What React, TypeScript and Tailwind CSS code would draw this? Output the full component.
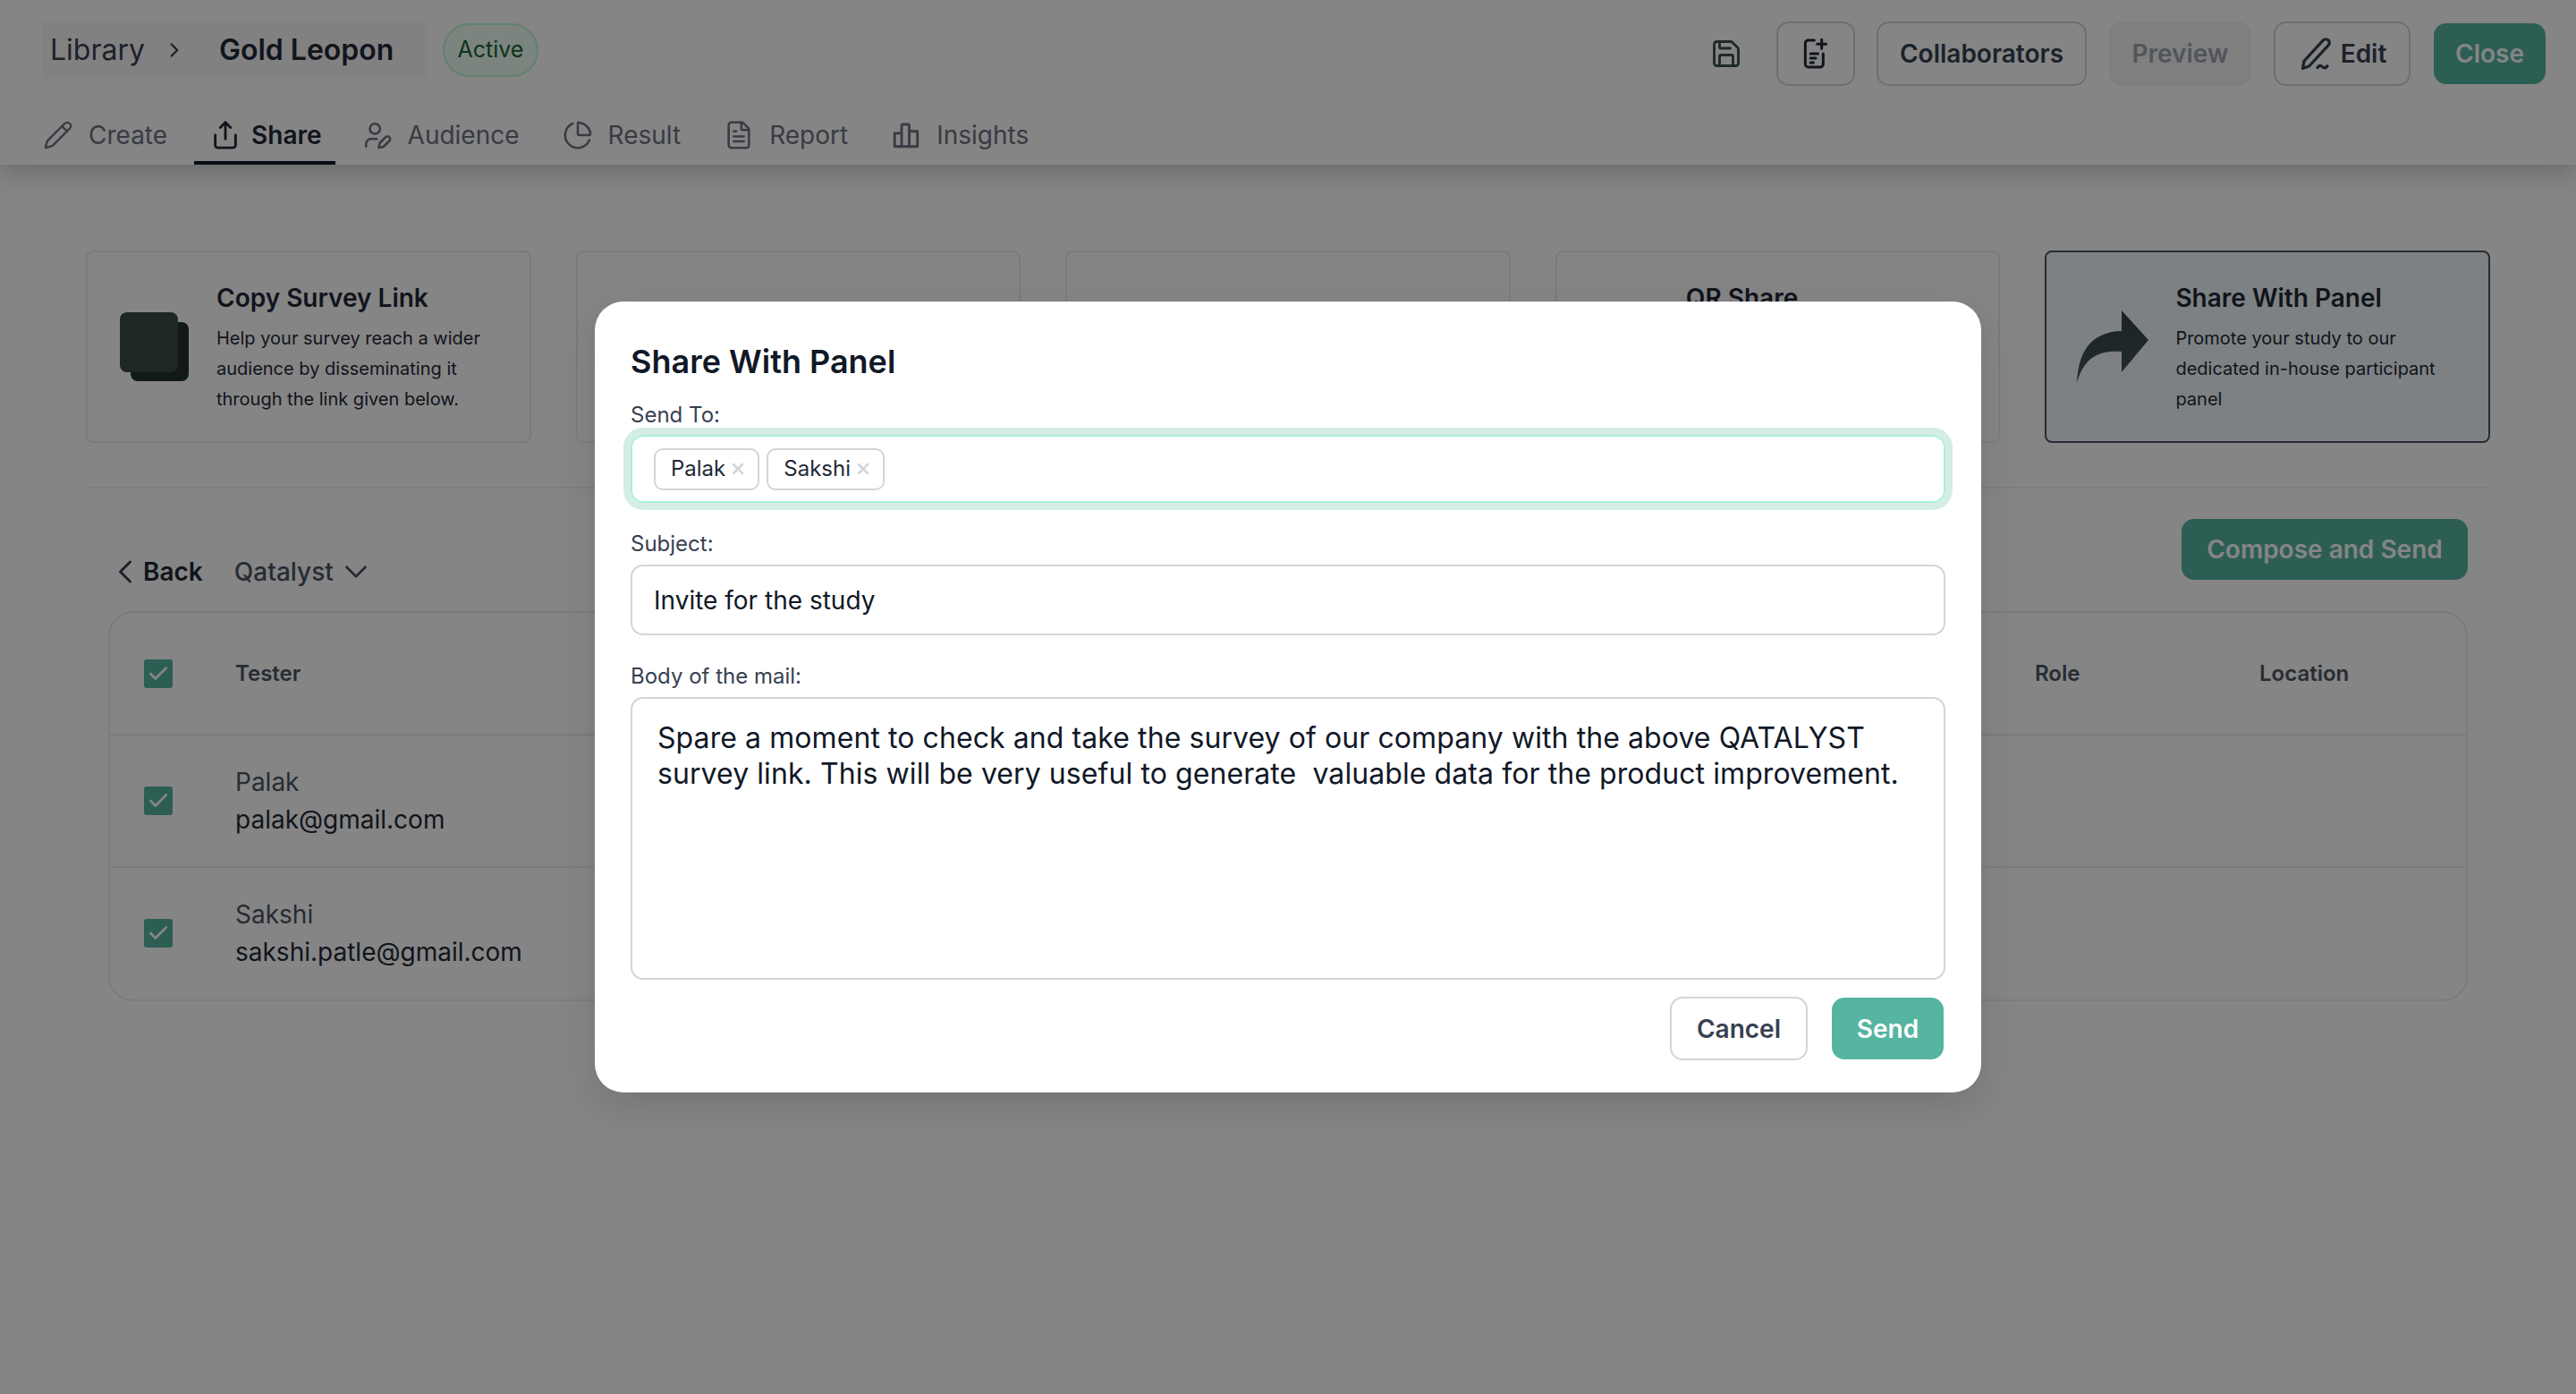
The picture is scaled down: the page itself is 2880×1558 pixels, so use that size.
import { Check, ChevronDown, ChevronLeft, ChevronRight, ChartPie, FileText, Pencil, Save, Share, UserPen, X } from "lucide-react";
import type { ReactNode } from "react";

function InsightsIcon() {
  return (
    <svg width="34" height="34" viewBox="0 0 24 24" fill="none" stroke="currentColor" strokeWidth="2" strokeLinejoin="round">
      <path d="M3 10.500h5.500V21H3zM8.500 4.500a1 1 0 0 1 1-1h4a1 1 0 0 1 1 1V21h-6zM14.500 9H21v12h-6.500z" />
    </svg>
  );
}

function FileAddIcon() {
  return (
    <svg width="40" height="40" viewBox="0 0 24 24" fill="none" stroke="currentColor" strokeWidth="1.800" strokeLinecap="round" strokeLinejoin="round">
      <path d="M11 3H7a2 2 0 0 0-2 2v14a2 2 0 0 0 2 2h8a2 2 0 0 0 2-2v-7" />
      <path d="M16 2.500v6M13 5.500h6M8.500 12h5M8.500 15h3.500M8.500 18h2" />
    </svg>
  );
}

function EditIcon() {
  return (
    <svg width="44" height="44" viewBox="0 0 24 24" fill="none" stroke="currentColor" strokeWidth="1.800" strokeLinecap="round" strokeLinejoin="round">
      <path d="M3 21l.8-4.500L15.500 3.800a2.200 2.200 0 0 1 3.100 0 2.200 2.200 0 0 1 0 3.100L7 19.500z" />
      <path d="M12 20.500c1-1.500 2-1.500 3-.5s2 1 3-.5" />
    </svg>
  );
}

function CopyIcon() {
  return (
    <svg width="77" height="77" viewBox="0 0 77 77">
      <rect x="12" y="11" width="65" height="66" rx="8" fill="#213230" />
      <rect x="0" y="0" width="65" height="67" rx="8" fill="#3a494a" />
    </svg>
  );
}

function ShareArrowIcon() {
  return (
    <svg width="80" height="81" viewBox="0 0 80 81">
      <defs>
        <linearGradient id="share-arrow" x1="0" y1="0" x2="0" y2="1">
          <stop offset="0" stopColor="#334041" />
          <stop offset="1" stopColor="#46595c" />
        </linearGradient>
      </defs>
      <path d="M50 0L80 33 50 69V46C25 44 8 52 0 81 2 40 20 24 50 23Z" fill="url(#share-arrow)" />
    </svg>
  );
}

const TABS = [
  { label: "Create", icon: <Pencil size={34} strokeWidth={1.7} /> },
  { label: "Share", icon: <Share size={34} strokeWidth={2} />, active: true },
  { label: "Audience", icon: <UserPen size={34} strokeWidth={1.8} /> },
  { label: "Result", icon: <ChartPie size={34} strokeWidth={1.8} /> },
  { label: "Report", icon: <FileText size={34} strokeWidth={1.8} /> },
  { label: "Insights", icon: <InsightsIcon /> },
];

function Header() {
  return (
    <header className="relative h-[184px] bg-white shadow-[0_8px_28px_rgba(0,0,0,0.22)]">
      <div className="flex h-[120px] items-start justify-between pl-[48px] pr-[34px] pt-[24px]">
        <div className="flex items-center gap-[17px]">
          <div className="flex h-[64px] w-[430px] items-center bg-[#f7f7f7] pl-[8px] text-[32px]">
            <span className="text-[#374151]">Library</span>
            <ChevronRight size={26} strokeWidth={2.2} className="ml-[20px] text-[#374151]" />
            <span className="ml-[37px] font-semibold text-[#1f2937]">Gold Leopon</span>
          </div>
          <span className="flex h-[60px] w-[107px] items-center justify-center rounded-[30px] border-2 border-[#bbf7d0] bg-[#ecfdf3] text-[25px] text-[#166534]">
            Active
          </span>
        </div>
        <div className="flex items-center">
          <Save size={36} strokeWidth={1.9} className="text-[#3d4f4c]" />
          <button className="ml-[38px] flex h-[72px] w-[88px] items-center justify-center rounded-[14px] border-2 border-[#d1d5db] text-[#1f2937]">
            <FileAddIcon />
          </button>
          <button className="ml-[24px] h-[72px] w-[235px] rounded-[14px] border-2 border-[#d1d5db] text-[28px] font-semibold text-[#374151]">
            Collaborators
          </button>
          <button className="ml-[25px] h-[72px] w-[159px] rounded-[14px] border-2 border-[#f3f4f6] bg-[#f3f4f6] text-[28px] font-semibold text-[#9ca3af]">
            Preview
          </button>
          <button className="ml-[25px] flex h-[72px] w-[153px] items-center justify-center gap-[4px] rounded-[14px] border-2 border-[#d1d5db] text-[28px] font-semibold text-[#374151]">
            <EditIcon />
            Edit
          </button>
          <button className="ml-[26px] h-[68px] w-[125px] rounded-[14px] bg-[#55b5a0] text-[28px] font-semibold text-white">
            Close
          </button>
        </div>
      </div>
      <nav className="flex h-[64px] gap-[12px] pl-[30px]">
        {TABS.map((tab) => (
          <div
            key={tab.label}
            className={
              tab.active
                ? "flex h-[64px] items-center gap-[12px] border-b-4 border-[#111827] pl-[18px] pr-[15px] pt-[2px] text-[28px] font-semibold text-[#1f2937]"
                : "flex h-[64px] items-center gap-[17px] border-b-4 border-transparent px-[18px] pt-[2px] text-[28px] text-[#6b7280]"
            }
          >
            {tab.icon}
            {tab.label}
          </div>
        ))}
      </nav>
    </header>
  );
}

function OptionCard({ title, lines, icon, active }: { title?: string; lines?: string[]; icon?: ReactNode; active?: boolean }) {
  return (
    <div
      className={
        active
          ? "flex h-[215px] items-center gap-[30px] rounded-[8px] border-2 border-[#4b5563] bg-[#eff8fb] pl-[34px]"
          : "flex h-[215px] items-center gap-[30px] rounded-[8px] border-2 border-[#ececec] pl-[34px]"
      }
    >
      <div className="flex w-[80px] shrink-0 justify-center">{icon}</div>
      {title && (
        <div>
          <h3 className="text-[28px] leading-[40px] font-semibold text-[#1f2937]">{title}</h3>
          <div className="mt-[8px] text-[20px] leading-[34px] text-[#1f2937]">
            {lines?.map((l, i) => <p key={i}>{l}</p>)}
          </div>
        </div>
      )}
    </div>
  );
}

function CheckBox() {
  return (
    <span className="flex h-[32px] w-[32px] items-center justify-center rounded-[3px] bg-[#55b5a0] text-white">
      <Check size={26} strokeWidth={2.6} />
    </span>
  );
}

function TesterRow({ name, email }: { name: string; email: string }) {
  return (
    <div className="flex h-[148px] items-center border-t-2 border-[#ececec]">
      <div className="w-[140px] pl-[38px]">
        <CheckBox />
      </div>
      <div className="text-[28px] leading-[42px]">
        <p className="text-[#4b5563]">{name}</p>
        <p className="text-[#1f2937]">{email}</p>
      </div>
    </div>
  );
}

function ShareModal() {
  return (
    <div className="absolute inset-0 flex items-center justify-center bg-black/48">
      <div className="h-[884px] w-[1550px] rounded-[32px] bg-white px-[40px] pt-[42px] shadow-[0_16px_40px_rgba(0,0,0,0.12)]">
        <h2 className="text-[36px] leading-[50px] font-semibold text-[#111827]">Share With Panel</h2>
        <label className="mt-[18px] block text-[24px] leading-[34px] text-[#374151]">Send To:</label>
        <div className="mt-[5px] flex h-[76px] items-center gap-[8px] rounded-[14px] border-2 border-[#a7f3d0] pl-[24px] outline-8 outline-[#d5ede6]">
          {["Palak", "Sakshi"].map((n) => (
            <span key={n} className="flex h-[47px] items-center gap-[4px] rounded-[10px] border-2 border-[#d1d5db] pl-[17px] pr-[12px] text-[24px] text-[#1f2937]">
              {n}
              <X size={20} strokeWidth={3} className="text-[#d1d5db]" />
            </span>
          ))}
        </div>
        <label className="mt-[29px] block text-[24px] leading-[34px] text-[#374151]">Subject:</label>
        <div className="mt-[6px] flex h-[79px] items-center rounded-[14px] border-2 border-[#d1d5db] pl-[24px] text-[28px] text-[#111827]">
          Invite for the study
        </div>
        <label className="mt-[29px] block text-[24px] leading-[34px] text-[#374151]">Body of the mail:</label>
        <div className="mt-[6px] h-[316px] rounded-[14px] border-2 border-[#d1d5db] pl-[28px] pr-[20px] pt-[24px] text-[32px] leading-[40px] tracking-[0.08px] whitespace-pre-wrap text-[#111827]">
          {"Spare a moment to check and take the survey of our company with the above QATALYST\nsurvey link. This will be very useful to generate  valuable data for the product improvement."}
        </div>
        <div className="mt-[19px] flex items-center justify-end gap-[27px] pr-[2px]">
          <button className="h-[71px] w-[154px] rounded-[14px] border-2 border-[#d1d5db] text-[28px] font-semibold text-[#374151]">Cancel</button>
          <button className="h-[69px] w-[125px] rounded-[14px] bg-[#55b5a0] text-[28px] font-semibold text-white">Send</button>
        </div>
      </div>
    </div>
  );
}

export default function App() {
  return (
    <div className="relative h-[1558px] w-[2880px] overflow-hidden bg-white font-[Inter,sans-serif]">
      <Header />
      <main className="px-[96px] pt-[96px]">
        <div className="grid grid-cols-5 gap-[50px] border-b-2 border-[#ececec] pb-[49px]">
          <OptionCard
            title="Copy Survey Link"
            icon={<CopyIcon />}
            lines={["Help your survey reach a wider", "audience by disseminating it", "through the link given below."]}
          />
          <OptionCard />
          <OptionCard />
          <OptionCard title="QR Share" lines={["\u00a0", "\u00a0", "\u00a0"]} />
          <OptionCard
            active
            title="Share With Panel"
            icon={<ShareArrowIcon />}
            lines={["Promote your study to our", "dedicated in-house participant", "panel"]}
          />
        </div>
        <div className="mt-[34px] flex h-[70px] items-start justify-between pl-[22px] pr-[25px]">
          <div className="mt-[37px] flex items-center text-[28px]">
            <ChevronLeft size={44} strokeWidth={1.6} className="text-[#374151]" />
            <span className="ml-[-2px] font-semibold text-[#1f2937]">Back</span>
            <span className="ml-[35px] font-medium text-[#4b5563]">Qatalyst</span>
            <ChevronDown size={42} strokeWidth={1.6} className="ml-[4px] text-[#4b5563]" />
          </div>
          <button className="h-[68px] w-[320px] rounded-[14px] bg-[#55b5a0] text-[28px] font-semibold text-white">Compose and Send</button>
        </div>
        <div className="mx-[25px] mt-[33px] h-[436px] rounded-[28px] border-2 border-[#ececec]">
          <div className="flex h-[135px] items-center text-[24px] font-semibold text-[#4b5563]">
            <div className="w-[140px] pl-[38px]">
              <CheckBox />
            </div>
            <div className="flex-1">Tester</div>
            <div className="w-[251px]">Role</div>
            <div className="w-[231px]">Location</div>
          </div>
          <TesterRow name="Palak" email="palak@gmail.com" />
          <TesterRow name="Sakshi" email="sakshi.patle@gmail.com" />
        </div>
      </main>
      <ShareModal />
    </div>
  );
}
